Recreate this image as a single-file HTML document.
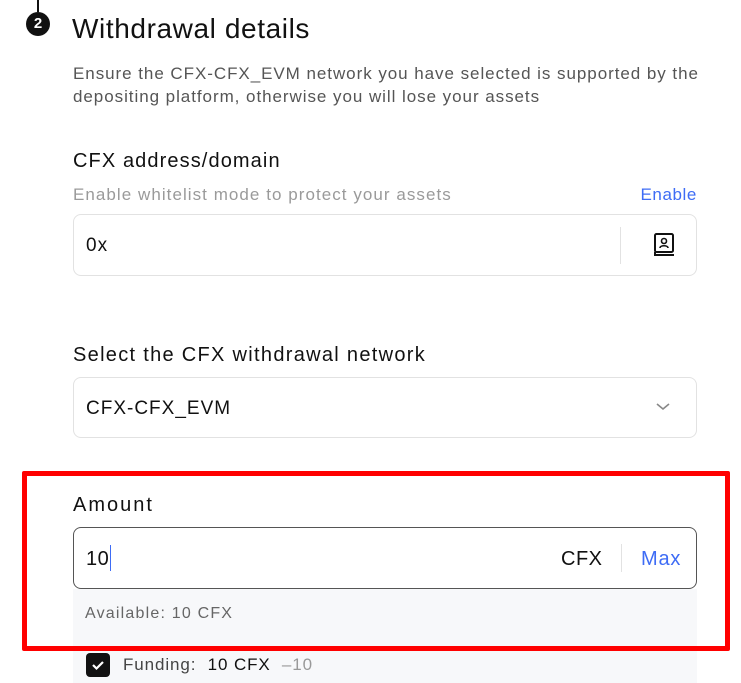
<!DOCTYPE html>
<html><head><meta charset="utf-8"><style>
*{margin:0;padding:0;box-sizing:border-box}
body{width:741px;height:683px;background:#fff;font-family:"Liberation Sans",sans-serif;color:#111;position:relative;overflow:hidden}
.a{position:absolute;white-space:nowrap}
.box{position:absolute;left:73px;width:624px;height:62px;border:1px solid #e2e2e2;border-radius:8px;background:#fff}
.lbl{font-size:20px;letter-spacing:1.1px}
</style></head><body>
<div class="a" style="left:37px;top:0;width:2px;height:12px;background:#111"></div>
<div class="a" style="left:26px;top:12px;width:24px;height:24px;border-radius:50%;background:#111;color:#fff;font-weight:bold;font-size:15px;text-align:center;line-height:24px">2</div>
<div class="a" style="left:72px;top:13px;font-size:28px;letter-spacing:0.6px;color:#111">Withdrawal details</div>
<div class="a" style="left:73px;top:62px;font-size:17px;letter-spacing:0.95px;line-height:23px;color:#555">Ensure the CFX-CFX_EVM network you have selected is supported by the<br>depositing platform, otherwise you will lose your assets</div>
<div class="a lbl" style="left:73px;top:150px">CFX address/domain</div>
<div class="a" style="left:73px;top:185px;font-size:17px;letter-spacing:1.05px;color:#9a9a9a">Enable whitelist mode to protect your assets</div>
<div class="a" style="right:44px;top:185px;font-size:17px;letter-spacing:0.6px;color:#3e6cf5">Enable</div>
<div class="box" style="top:214px"></div>
<div class="a" style="left:86px;top:235px;font-size:19px;letter-spacing:1px">0x</div>
<div class="a" style="left:620px;top:227px;width:1px;height:37px;background:#e2e2e2"></div>
<svg class="a" style="left:652px;top:232px" width="24" height="26" viewBox="0 0 24 26"><rect x="3" y="2" width="18" height="18" rx="1.5" fill="none" stroke="#111" stroke-width="2"/><path d="M3 20v3h19" fill="none" stroke="#111" stroke-width="2"/><circle cx="12" cy="9" r="2.5" fill="none" stroke="#111" stroke-width="1.6"/><path d="M8 16c0-3 8-3 8 0" fill="none" stroke="#111" stroke-width="1.6"/></svg>
<div class="a lbl" style="left:73px;top:344px;letter-spacing:1.3px">Select the CFX withdrawal network</div>
<div class="box" style="top:377px;height:61px"></div>
<div class="a" style="left:86px;top:398px;font-size:19px;letter-spacing:1px">CFX-CFX_EVM</div>
<svg class="a" style="left:655px;top:402px" width="16" height="10" viewBox="0 0 16 10"><path d="M2 2l6 5 6-5" fill="none" stroke="#888" stroke-width="1.6"/></svg>
<div class="a" style="left:73px;top:589px;width:624px;height:94px;background:#f7f8fa"></div>
<div class="a lbl" style="left:73px;top:494px;letter-spacing:2px">Amount</div>
<div class="box" style="top:527px;height:62px;border:1.5px solid #555"></div>
<div class="a" style="left:86px;top:548px;font-size:20px;letter-spacing:0.5px">10</div>
<div class="a" style="left:110px;top:545px;width:1px;height:26px;background:#3e6cf5"></div>
<div class="a" style="left:561px;top:548px;font-size:20px;letter-spacing:0.5px">CFX</div>
<div class="a" style="left:621px;top:544px;width:1px;height:28px;background:#e2e2e2"></div>
<div class="a" style="left:641px;top:548px;font-size:20px;letter-spacing:0.8px;color:#3e6cf5">Max</div>
<div class="a" style="left:85px;top:605px;font-size:16px;letter-spacing:1.2px;color:#666">Available: 10 CFX</div>
<div class="a" style="left:22px;top:471px;width:708px;height:180px;border:5px solid #f00;border-radius:2px"></div>
<div class="a" style="left:86px;top:653px;width:24px;height:24px;background:#111;border-radius:4px"></div>
<svg class="a" style="left:90px;top:657px" width="16" height="16" viewBox="0 0 16 16"><path d="M3 8l3.5 3.5L13 5" fill="none" stroke="#fff" stroke-width="2.2"/></svg>
<div class="a" style="left:123px;top:655px;font-size:17px;letter-spacing:0.9px;color:#444">Funding:&nbsp;&nbsp;<span style="color:#111">10 CFX</span>&nbsp;&nbsp;<span style="color:#999">–10</span></div>
</body></html>
